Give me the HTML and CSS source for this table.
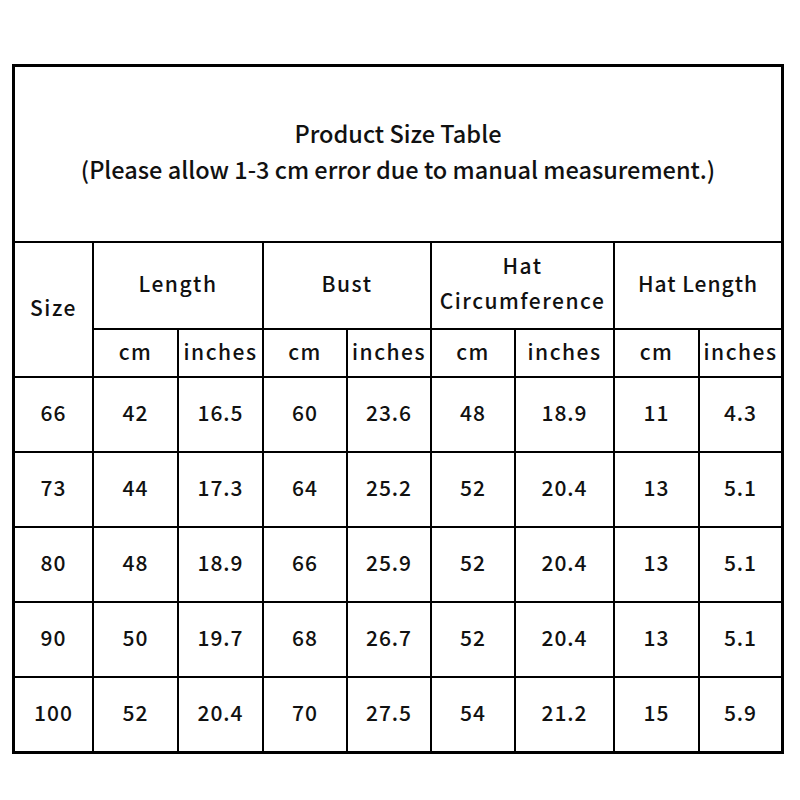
FILE: index.html
```html
<!DOCTYPE html>
<html>
<head>
<meta charset="utf-8">
<link rel="stylesheet" href="styles.css">
</head>
<body>
<div class="sheet">
  <div class="title">
    <div>Product Size Table</div>
    <div>(Please allow 1-3 cm error due to manual measurement.)</div>
  </div>
  <div class="h size">Size</div>
  <div class="h grp g1">Length</div>
  <div class="h grp g2">Bust</div>
  <div class="h grp g3 two">Hat<br>Circumference</div>
  <div class="h grp g4">Hat Length</div>
  <div class="h sub">cm</div><div class="h sub">inches</div>
  <div class="h sub">cm</div><div class="h sub">inches</div>
  <div class="h sub">cm</div><div class="h sub">inches</div>
  <div class="h sub">cm</div><div class="h sub">inches</div>

  <div class="c">66</div><div class="c">42</div><div class="c">16.5</div><div class="c">60</div><div class="c">23.6</div><div class="c">48</div><div class="c">18.9</div><div class="c">11</div><div class="c">4.3</div>
  <div class="c">73</div><div class="c">44</div><div class="c">17.3</div><div class="c">64</div><div class="c">25.2</div><div class="c">52</div><div class="c">20.4</div><div class="c">13</div><div class="c">5.1</div>
  <div class="c">80</div><div class="c">48</div><div class="c">18.9</div><div class="c">66</div><div class="c">25.9</div><div class="c">52</div><div class="c">20.4</div><div class="c">13</div><div class="c">5.1</div>
  <div class="c">90</div><div class="c">50</div><div class="c">19.7</div><div class="c">68</div><div class="c">26.7</div><div class="c">52</div><div class="c">20.4</div><div class="c">13</div><div class="c">5.1</div>
  <div class="c">100</div><div class="c">52</div><div class="c">20.4</div><div class="c">70</div><div class="c">27.5</div><div class="c">54</div><div class="c">21.2</div><div class="c">15</div><div class="c">5.9</div>
</div>
</body>
</html>
```

FILE: styles.css
```css
html, body {
  margin: 0;
  padding: 0;
  background: #fff;
}
body {
  font-family: "Noto Sans CJK SC", "Noto Sans", sans-serif;
  color: #111;
}
.sheet {
  margin: 64px 0 0 12px;
  width: 766px;
  border: 3px solid #000;
  background: #000;
  display: grid;
  grid-template-columns: 77px 83px 83px 82px 82px 82px 97px 83px 81px;
  grid-template-rows: 174px 85px 46px 73px 73px 73px 73px 73px;
  gap: 2px;
}
.sheet > div {
  background: #fff;
  display: flex;
  align-items: center;
  justify-content: center;
  text-align: center;
  box-sizing: border-box;
  padding-bottom: 6px;
}
.title {
  grid-column: 1 / -1;
  flex-direction: column;
  font-size: 23.5px;
  font-weight: 500;
  line-height: 36px;
}
.h {
  font-size: 21px;
  font-weight: 500;
  letter-spacing: 1.5px;
}
.g1 { grid-column: 2 / 4; }
.g2 { grid-column: 4 / 6; }
.g3 { grid-column: 6 / 8; line-height: 35px; }
.g4 { grid-column: 8 / 10; letter-spacing: 1px; }
.size {
  grid-row: 2 / 4;
}
.sheet > .sub {
  padding-bottom: 4px;
}
.c {
  font-size: 21px;
  font-weight: 500;
  letter-spacing: 1px;
}
```
